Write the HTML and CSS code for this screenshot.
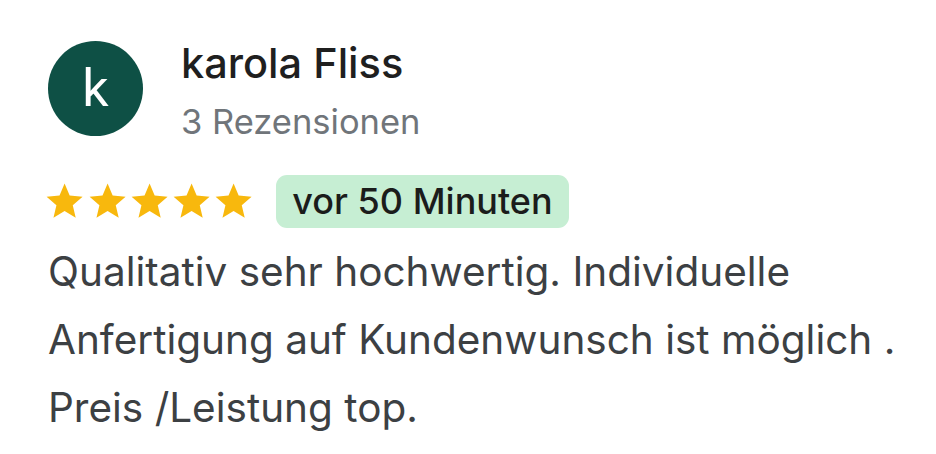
FILE: index.html
```html
<!DOCTYPE html>
<html lang="de">
<head>
<meta charset="utf-8">
<link rel="stylesheet" href="styles.css">
</head>
<body>
<div class="review">
  <div class="header">
    <div class="avatar">k</div>
    <div class="meta">
      <div class="name">karola Fliss</div>
      <div class="count">3 Rezensionen</div>
    </div>
  </div>
  <div class="rating">
    <div class="stars">
      <svg class="star" viewBox="0 0 24 24"><path d="M12 17.27L18.18 21l-1.64-7.03L22 9.24l-7.19-.61L12 2 9.19 8.63 2 9.24l5.46 4.73L5.82 21z"/></svg>
      <svg class="star" viewBox="0 0 24 24"><path d="M12 17.27L18.18 21l-1.64-7.03L22 9.24l-7.19-.61L12 2 9.19 8.63 2 9.24l5.46 4.73L5.82 21z"/></svg>
      <svg class="star" viewBox="0 0 24 24"><path d="M12 17.27L18.18 21l-1.64-7.03L22 9.24l-7.19-.61L12 2 9.19 8.63 2 9.24l5.46 4.73L5.82 21z"/></svg>
      <svg class="star" viewBox="0 0 24 24"><path d="M12 17.27L18.18 21l-1.64-7.03L22 9.24l-7.19-.61L12 2 9.19 8.63 2 9.24l5.46 4.73L5.82 21z"/></svg>
      <svg class="star" viewBox="0 0 24 24"><path d="M12 17.27L18.18 21l-1.64-7.03L22 9.24l-7.19-.61L12 2 9.19 8.63 2 9.24l5.46 4.73L5.82 21z"/></svg>
    </div>
    <div class="badge">vor 50 Minuten</div>
  </div>
  <p class="text">Qualitativ sehr hochwertig. Individuelle Anfertigung auf Kundenwunsch ist möglich . Preis /Leistung top.</p>
</div>
</body>
</html>
```
FILE: styles.css
```css
html, body {
  margin: 0;
  padding: 0;
  background: #ffffff;
}
body {
  font-family: Inter, Roboto, sans-serif;
  width: 936px;
  height: 454px;
  overflow: hidden;
}
.review {
  padding: 38px 0 0 48px;
}
.header {
  display: flex;
  align-items: flex-start;
  gap: 38px;
}
.avatar {
  width: 95px;
  height: 95px;
  margin-top: 3px;
  border-radius: 50%;
  background: #0e5045;
  color: #ffffff;
  font-family: Roboto, sans-serif;
  font-size: 52px;
  display: flex;
  align-items: center;
  justify-content: center;
  line-height: 1;
}
.meta {
  display: flex;
  flex-direction: column;
}
.name {
  font-size: 41.5px;
  color: #1f1f1f;
  line-height: 50px;
  font-weight: 500;
}
.count {
  font-size: 34.5px;
  color: #70757a;
  line-height: 40px;
  margin-top: 14px;
}
.rating {
  display: flex;
  align-items: center;
  margin-top: 33px;
  gap: 22px;
}
.stars {
  display: flex;
  margin-left: -4.6px;
}
.star {
  width: 43.2px;
  height: 43.2px;
  margin-right: -1px;
  fill: #f8b80d;
}
.badge {
  background: #c6eed3;
  color: #1b1c1b;
  font-size: 36px;
  line-height: 53px;
  height: 53px;
  padding: 0 16px;
  border-radius: 11px;
  font-weight: 500;
}
.text {
  margin: 10px 0 0 0;
  font-size: 40.5px;
  line-height: 68px;
  color: #3c4043;
  width: 880px;
}
```
